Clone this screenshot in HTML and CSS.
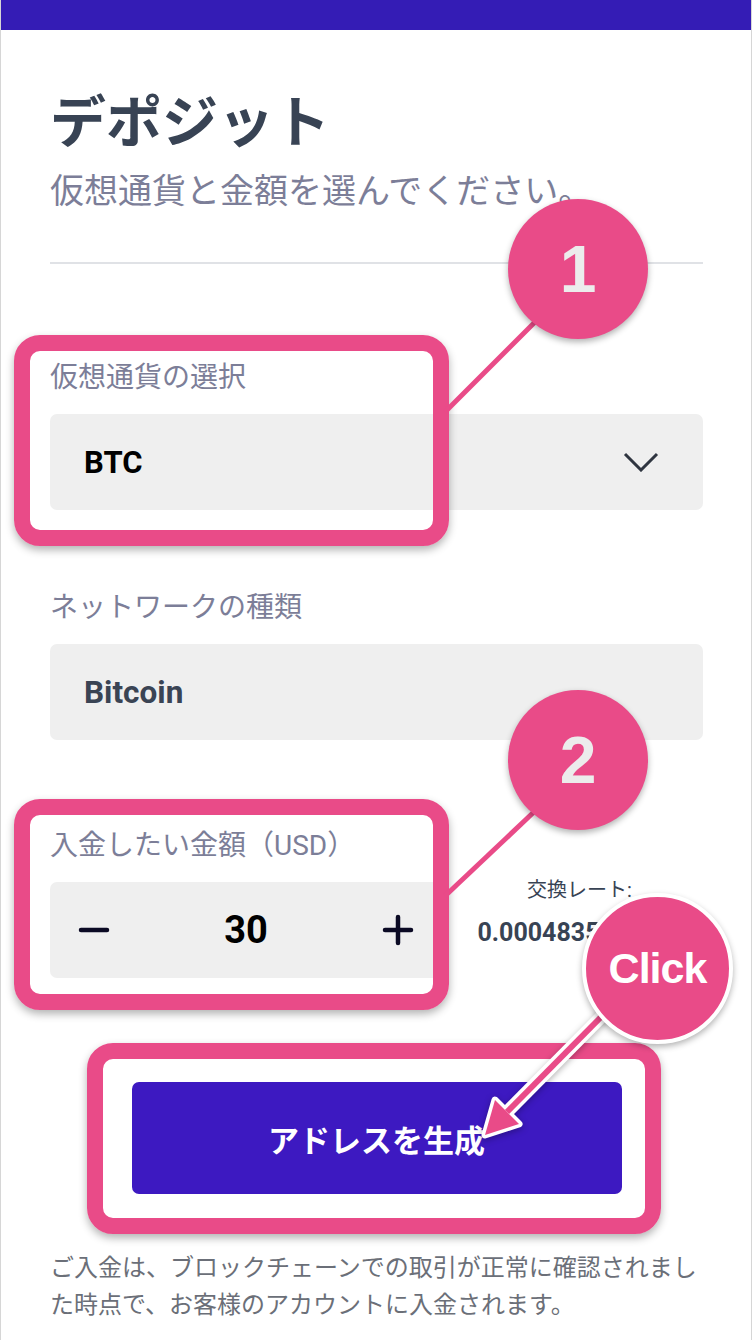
FILE: index.html
```html
<!DOCTYPE html>
<html lang="ja">
<head>
    <meta charset="UTF-8">
    <meta name="viewport" content="width=device-width, initial-scale=1.0">
    <title>デポジット</title>
    <link rel="stylesheet" href="styles.css">
</head>
<body>
    <div class="page">
        <div class="topbar"></div>

        <div class="content">
            <h1 class="title">デポジット</h1>
            <p class="subtitle">仮想通貨と金額を選んでください。</p>
            <hr class="divider">

            <div class="field field-coin">
                <div class="field-label">仮想通貨の選択</div>
                <div class="select-box">
                    <span class="select-value">BTC</span>
                    <svg class="chevron" width="36" height="20" viewBox="0 0 36 20">
                        <polyline points="2,2 18,18 34,2" fill="none" stroke="#2f3540" stroke-width="3"/>
                    </svg>
                </div>
            </div>

            <div class="field field-network">
                <div class="field-label">ネットワークの種類</div>
                <div class="static-box">Bitcoin</div>
            </div>

            <div class="field field-amount">
                <div class="field-label">入金したい金額（USD）</div>
                <div class="amount-row">
                    <div class="stepper">
                        <svg width="32" height="32" viewBox="0 0 32 32">
                            <line x1="3" y1="16" x2="29" y2="16" stroke="#0b0a24" stroke-width="4.5" stroke-linecap="round"/>
                        </svg>
                        <span class="stepper-value">30</span>
                        <svg width="32" height="32" viewBox="0 0 32 32">
                            <line x1="3" y1="16" x2="29" y2="16" stroke="#0b0a24" stroke-width="4.5" stroke-linecap="round"/>
                            <line x1="16" y1="3" x2="16" y2="29" stroke="#0b0a24" stroke-width="4.5" stroke-linecap="round"/>
                        </svg>
                    </div>
                    <div class="rate">
                        <div class="rate-label">交換レート:</div>
                        <div class="rate-value">0.000483537 BTC</div>
                    </div>
                </div>
            </div>

            <button class="generate-btn">アドレスを生成</button>

            <p class="note">ご入金は、ブロックチェーンでの取引が正常に確認されました時点で、お客様のアカウントに入金されます。</p>
        </div>

        <!-- annotations -->
        <div class="mark mark-coin"></div>
        <div class="mark mark-amount"></div>
        <div class="mark mark-button"></div>

        <svg class="pointers" width="752" height="1340" viewBox="0 0 752 1340">
            <line x1="536" y1="321" x2="445" y2="412" stroke="#e94b88" stroke-width="5"/>
            <line x1="536" y1="810" x2="445" y2="896" stroke="#e94b88" stroke-width="5"/>
            <g class="arrow">
                <line x1="606" y1="1012" x2="507" y2="1112" stroke="#fff" stroke-width="13"/>
                <polygon points="485,1135 495,1100 519,1124" fill="#fff" stroke="#fff" stroke-width="7" stroke-linejoin="round"/>
                <line x1="606" y1="1012" x2="507" y2="1112" stroke="#e94b88" stroke-width="6"/>
                <polygon points="485,1135 495,1100 519,1124" fill="#e94b88"/>
            </g>
        </svg>

        <div class="badge badge-one">1</div>
        <div class="badge badge-two">2</div>
        <div class="badge badge-click">Click</div>
    </div>
</body>
</html>
```

FILE: styles.css
```css
body { margin: 0; padding: 0; background: #fff; font-family: Roboto, "Noto Sans CJK JP", sans-serif; }
.page { position: relative; width: 752px; min-height: 1340px; box-sizing: border-box; border-left: 1px solid #d6d6d6; border-right: 1px solid #d6d6d6; overflow: hidden; }
.topbar { height: 30px; background-color: #341cb5; }
.content { padding: 0 48px 0 49px; }
.title { margin: 61px 0 0; font-size: 56px; line-height: 64px; font-weight: bold; color: #384354; }
.subtitle { margin: 16px 0 0; font-size: 34px; line-height: 40px; color: #7c7e98; }
.divider { margin: 51px 0 0; border: none; height: 2px; background-color: #e0e2e6; }
.field-coin { margin-top: 96px; }
.field-network { margin-top: 80px; }
.field-amount { margin-top: 88px; }
.field-label { font-size: 28px; line-height: 36px; color: #7c7e98; margin-bottom: 18px; }
.select-box { height: 96px; background-color: #efefef; border-radius: 7px; display: flex; align-items: center; justify-content: space-between; padding: 0 44px 0 34px; }
.select-value { font-size: 31px; font-weight: bold; color: #000; }
.static-box { height: 96px; background-color: #efefef; border-radius: 7px; display: flex; align-items: center; padding: 0 34px; font-size: 31.5px; font-weight: bold; color: #3a4454; }
.amount-row { display: flex; align-items: flex-start; }
.stepper { width: 392px; height: 96px; box-sizing: border-box; background-color: #efefef; border-radius: 7px; display: flex; align-items: center; justify-content: space-between; padding: 0 28px 0 28px; }
.stepper-value { font-size: 38px; font-weight: bold; color: #000; }
.rate { flex: 1; padding-left: 14px; margin-top: -6px; text-align: center; color: #384354; }
.rate-label { font-size: 20px; line-height: 28px; }
.rate-value { margin-top: 14px; font-size: 25px; line-height: 30px; font-weight: bold; white-space: nowrap; }
.generate-btn { display: block; width: 490px; height: 112px; margin: 104px auto 0; border: none; border-radius: 7px; background-color: #3d19c1; color: #fff; font-family: inherit; font-size: 31px; font-weight: bold; cursor: pointer; }
.note { margin: 56px 0 0; font-size: 24px; line-height: 37px; color: #6b6f78; }

/* annotations */
.mark { position: absolute; box-sizing: border-box; border: 16px solid #e94b88; border-radius: 26px; box-shadow: 0 4px 8px rgba(0,0,0,0.3); }
.mark-coin { left: 13px; top: 335px; width: 435px; height: 211px; }
.mark-amount { left: 13px; top: 799px; width: 435px; height: 211px; }
.mark-button { left: 86px; top: 1043px; width: 574px; height: 191px; }
.pointers { position: absolute; left: -1px; top: 0; }
.arrow { filter: drop-shadow(0 2px 3px rgba(0,0,0,0.3)); }
.badge { position: absolute; box-sizing: border-box; border-radius: 50%; background-color: #e94b88; box-shadow: 0 3px 6px rgba(0,0,0,0.3); display: flex; align-items: center; justify-content: center; font-family: "Liberation Sans", Arial, sans-serif; font-weight: bold; }
.badge-one, .badge-two { width: 140px; height: 140px; font-size: 66px; color: #ececec; }
.badge-one { left: 507px; top: 199px; }
.badge-two { left: 507px; top: 690px; }
.badge-click { left: 581px; top: 893px; width: 151px; height: 151px; border: 4px solid #fff; font-size: 43px; letter-spacing: -1px; color: #fff; }
```
